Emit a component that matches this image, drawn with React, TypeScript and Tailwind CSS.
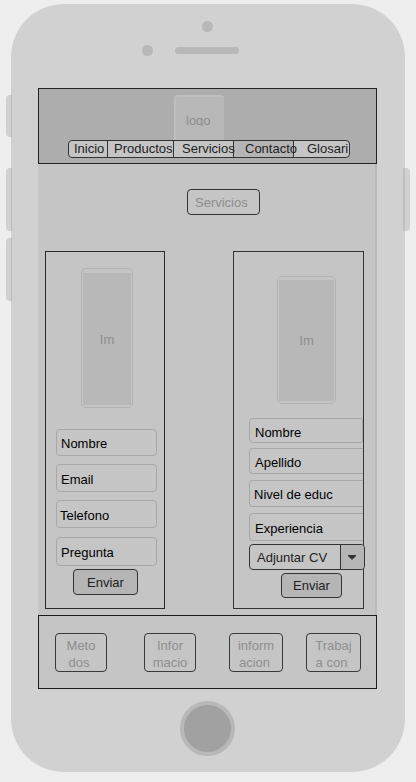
import type { ReactNode } from "react";

type BoxProps = { className?: string; children?: ReactNode };

function Field({ className = "", children }: BoxProps) {
  return (
    <div className={`shrink-0 whitespace-nowrap border border-[#a8a8a8] text-black ${className}`}>
      {children}
    </div>
  );
}

function Button({ className = "", children }: BoxProps) {
  return (
    <button
      className={`flex shrink-0 justify-center whitespace-nowrap rounded-[4px] border border-[#333] bg-[#b5b5b5] text-[#222] ${className}`}
    >
      {children}
    </button>
  );
}

function Picture({ className = "", children }: BoxProps) {
  return (
    <div className={`flex shrink-0 rounded-[5px] border border-[#b3b3b3] px-px ${className}`}>
      <div className="flex flex-1 items-center justify-center bg-[#b8b8b8] pt-px text-[#8e8e8e]">{children}</div>
    </div>
  );
}

function NavItem({ className = "", children }: BoxProps) {
  return (
    <a className={`block ${className}`}>
      <span className="relative z-10">{children}</span>
    </a>
  );
}

function FooterLink({ className = "", children }: BoxProps) {
  return (
    <a
      className={`block shrink-0 rounded-[4px] border border-[#3a3a3a] text-center leading-[17px] text-[#8e8e8e] ${className}`}
    >
      {children}
    </a>
  );
}

export default function App() {
  return (
    <div className="relative h-[782px] w-[416px] overflow-hidden bg-[#eeeeee] pl-[11px] pt-1 font-['Liberation_Sans',Arial,sans-serif] text-[13px] leading-4">
      <div className="flex h-[768px] w-[394px] flex-col rounded-[53px] bg-[#d1d1d1] pl-[27px]">
        <div className="h-[84px] w-[339px] shrink-0 pt-[17px]">
          <div className="ml-[164px] size-[11px] rounded-full bg-[#b8b8b8]" />
          <div className="mt-[13px] flex items-center">
            <div className="ml-[104px] size-[11px] rounded-full bg-[#b8b8b8]" />
            <div className="ml-[22px] h-[7px] w-16 rounded-full bg-[#b8b8b8]" />
          </div>
        </div>

        <main className="flex h-[601px] w-[339px] shrink-0 flex-col bg-[#c5c5c5]">
          <header className="h-[76px] shrink-0 border border-[#222] bg-[#adadad] pt-[6px]">
            <div className="ml-[135px] h-[45px] w-[50px] rounded-t-[4px] border-l-2 border-t-2 border-[#bfbfbf] bg-[#b8b8b8] pl-[10px] pt-[16px]">
              <div className="h-[13px] overflow-hidden text-[#8e8e8e]">logo</div>
            </div>
            <nav className="ml-[29px] flex h-[18px] w-[282px] whitespace-nowrap rounded-[4px] border border-[#333] bg-[#c5c5c5] text-[#222]">
              <NavItem className="w-[39px] border-r border-[#333] pl-[5px]">Inicio</NavItem>
              <NavItem className="w-[66px] border-r border-[#333] pl-[6px]">Productos</NavItem>
              <NavItem className="w-[60px] border-r border-[#333] pl-2">Servicios</NavItem>
              <NavItem className="w-[60px] border-r border-[#333] bg-[#b5b5b5] pl-[11px]">Contacto</NavItem>
              <NavItem className="pl-[13px]">Glosari</NavItem>
            </nav>
          </header>

          <div className="flex h-[451px] shrink-0 flex-col border-r-2 border-[#b9b9b9]">
            <div className="ml-[149px] mt-[25px] h-[26px] w-[73px] shrink-0 rounded-[4px] border border-[#333] pl-[7px] pt-[5px] text-[#8e8e8e]">
              Servicios
            </div>

            <div className="mt-9 flex shrink-0 pl-[7px]">
              <form className="flex h-[358px] w-[120px] shrink-0 flex-col border border-[#2a2a2a]">
                <Picture className="ml-[35px] mt-[16px] h-[140px] w-[52px] pb-[2px] pt-1">Im</Picture>
                <Field className="ml-[10px] mt-[21px] h-[27px] w-[101px] rounded-[4px] pl-1 pt-[6px]">Nombre</Field>
                <Field className="ml-[10px] mt-2 h-[28px] w-[101px] rounded-[4px] pl-1 pt-[7px]">Email</Field>
                <Field className="ml-[10px] mt-2 h-[28px] w-[101px] rounded-[4px] pl-[3px] pt-[7px]">Telefono</Field>
                <Field className="ml-[10px] mt-[9px] h-[29px] w-[101px] rounded-[4px] pl-1 pt-[7px]">Pregunta</Field>
                <Button className="ml-[27px] mt-[3px] h-[26px] w-[65px] pt-[5px]">Enviar</Button>
              </form>

              <form className="ml-[68px] flex h-[358px] w-[131px] shrink-0 flex-col border border-[#333]">
                <Picture className="ml-[43px] mt-[24px] h-[128px] w-[59px] pb-[2px] pt-[3px]">Im</Picture>
                <Field className="ml-[15px] mt-[14px] h-[25px] w-[114px] rounded-l-[4px] rounded-r-[2px] pl-[5px] pt-[6px]">
                  Nombre
                </Field>
                <Field className="ml-[15px] mt-[5px] h-[26px] w-[114px] rounded-l-[4px] border-r-0 pl-[5px] pt-[6px]">
                  Apellido
                </Field>
                <Field className="ml-[15px] mt-[6px] h-[27px] w-[114px] rounded-l-[4px] border-r-0 pl-[4px] pt-[6px]">
                  Nivel de educ
                </Field>
                <Field className="ml-[15px] mt-[6px] h-[28px] w-[114px] rounded-l-[4px] border-r-0 pl-[5px] pt-[7px]">
                  Experiencia
                </Field>
                <div className="ml-[15px] mt-[3px] flex h-[26px] w-[116px] shrink-0 overflow-hidden rounded-[4px] border border-[#333] text-[#222]">
                  <span className="w-[90px] shrink-0 pl-[7px] pt-[5px]">Adjuntar CV</span>
                  <span className="flex flex-1 items-center justify-center border-l border-[#333] bg-[#b5b5b5] pr-[2px]">
                    <svg width="8" height="5" viewBox="0 0 8 5" fill="#333">
                      <path d="M0 0h8v1L4.5 4.5h-1L0 1z" />
                    </svg>
                  </span>
                </div>
                <Button className="ml-[47px] mt-[3px] h-[25px] w-[61px] pt-1">Enviar</Button>
              </form>
            </div>
          </div>

          <footer className="flex h-[74px] shrink-0 border border-[#1c1c1c] pt-[17px]">
            <FooterLink className="ml-4 h-[39px] w-[52px] pt-[3px]">
              Meto
              <br />
              <span className="mr-1">dos</span>
            </FooterLink>
            <FooterLink className="ml-[37px] h-[39px] w-[52px] pt-[3px]">
              Infor
              <br />
              macio
            </FooterLink>
            <FooterLink className="ml-[33px] h-[39px] w-[54px] pt-[3px]">
              inform
              <br />
              <span className="mr-[3px]">acion</span>
            </FooterLink>
            <FooterLink className="ml-[23px] h-[39px] w-[55px] pt-[3px]">
              Trabaj
              <br />
              <span className="mr-1">a con</span>
            </FooterLink>
          </footer>
        </main>

        <button className="ml-[142px] mt-3 size-[55px] shrink-0 rounded-full border-4 border-[#b8b8b8] bg-[#a1a1a1]" />
      </div>

      <div className="absolute left-[6px] top-[95px] h-[42px] w-[6px] rounded-l-[4px] border-r border-[#b9b9b9] bg-[#d1d1d1]" />
      <div className="absolute left-[6px] top-[168px] h-[63px] w-[6px] rounded-l-[4px] border-r border-[#b9b9b9] bg-[#d1d1d1]" />
      <div className="absolute left-[6px] top-[238px] h-[63px] w-[6px] rounded-l-[4px] border-r border-[#b9b9b9] bg-[#d1d1d1]" />
      <div className="absolute left-[403px] top-[168px] h-[63px] w-[7px] rounded-r-[4px] border-l-2 border-[#bfbfbf] bg-[#d1d1d1]" />
    </div>
  );
}
